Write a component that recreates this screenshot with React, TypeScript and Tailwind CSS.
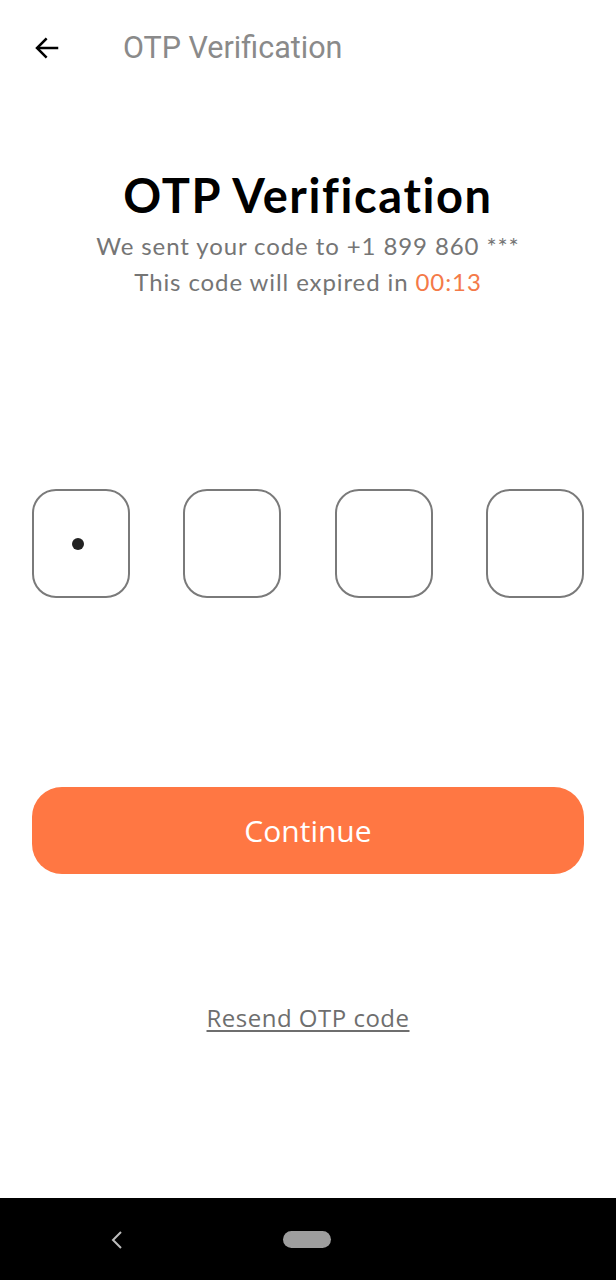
import React from "react";

export default function App() {
  return (
    <div className="w-[616px] h-[1280px] bg-white flex flex-col" style={{ fontFamily: "Lato, sans-serif" }}>
      {/* header */}
      <div className="h-[95px] flex items-center pl-[32px]">
        <svg width="30" height="30" viewBox="0 0 24 24" fill="none" stroke="#000" strokeWidth="2" strokeLinecap="square">
          <path d="M20 12H5" />
          <path d="M11 5l-7 7 7 7" strokeLinejoin="miter" />
        </svg>
        <div className="ml-[61px] text-[30.5px] text-[#8a8a8a]" style={{ fontFamily: "Roboto, sans-serif" }}>
          OTP Verification
        </div>
      </div>

      {/* title */}
      <div className="mt-[72px] flex flex-col items-center">
        <div className="text-[47px] leading-[56px] font-bold tracking-[1.6px] text-black" style={{ fontFamily: "Lato, sans-serif" }}>
          OTP Verification
        </div>
        <div className="mt-[5px] text-[24px] leading-[36px] tracking-[0.9px] text-[#757575] text-center">
          <div>We sent your code to +1 899 860 ***</div>
          <div>
            This code will expired in <span className="text-[#f47a48]">00:13</span>
          </div>
        </div>
      </div>

      {/* boxes */}
      <div className="mt-[189px] px-[32px] flex justify-between">
        {[0, 1, 2, 3].map((i) => (
          <div key={i} className="w-[98px] h-[109px] rounded-[24px] border-2 border-[#7a7a7a] flex items-center justify-center">
            {i === 0 && <div className="w-[12px] h-[12px] rounded-full bg-[#222] mr-[7px]" />}
          </div>
        ))}
      </div>

      {/* button */}
      <div className="mt-[189px] px-[32px]">
        <div className="h-[87px] rounded-[30px] bg-[#ff7743] flex items-center justify-center text-white text-[30px]" style={{ fontFamily: "'Open Sans', sans-serif" }}>
          Continue
        </div>
      </div>

      {/* resend */}
      <div className="mt-[126px] flex justify-center">
        <span className="text-[24px] tracking-[0.5px] text-[#6e6e6e] underline underline-offset-[3px]" style={{ fontFamily: "'Open Sans', sans-serif" }}>
          Resend OTP code
        </span>
      </div>

      <div className="flex-1" />

      {/* nav bar */}
      <div className="h-[82px] bg-black flex items-center relative">
        <div className="absolute left-[109px] top-[33px]">
          <svg width="16" height="18" viewBox="0 0 16 18" fill="none" stroke="#bdbdbd" strokeWidth="2">
            <path d="M12 1L4 9l8 8" />
          </svg>
        </div>
        <div className="absolute left-[283px] top-[33px] w-[48px] h-[17px] rounded-full bg-[#9e9e9e]" />
      </div>
    </div>
  );
}
